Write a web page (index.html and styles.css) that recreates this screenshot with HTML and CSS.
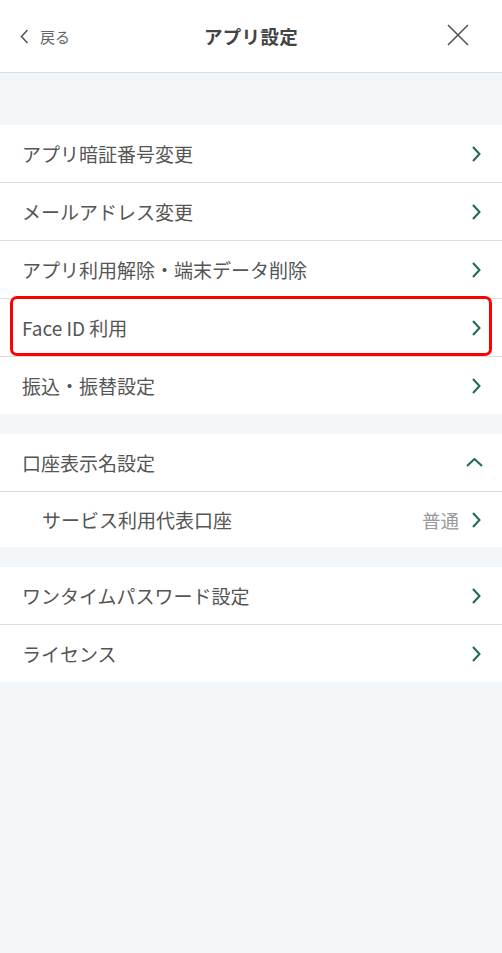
FILE: index.html
```html
<!DOCTYPE html>
<html lang="ja">
<head>
<meta charset="utf-8">
<title>アプリ設定</title>
<link rel="stylesheet" href="styles.css">
</head>
<body>
<header class="header">
  <div class="back">
    <svg class="back-icon" width="9" height="15" viewBox="0 0 9 15"><path d="M7.5 1 L1.5 7.5 L7.5 14" fill="none" stroke="#555" stroke-width="1.6"/></svg>
    <span>戻る</span>
  </div>
  <h1 class="title">アプリ設定</h1>
  <svg class="close" width="22" height="22" viewBox="0 0 22 22"><path d="M1 1 L21 21 M21 1 L1 21" fill="none" stroke="#555" stroke-width="1.6"/></svg>
</header>

<main class="content">
  <section class="group">
    <div class="row"><span class="label">アプリ暗証番号変更</span><svg class="chev" width="9" height="16" viewBox="0 0 9 16"><path d="M1 1 L7.5 8 L1 15" fill="none" stroke="#1d6b48" stroke-width="2"/></svg></div>
    <div class="row"><span class="label">メールアドレス変更</span><svg class="chev" width="9" height="16" viewBox="0 0 9 16"><path d="M1 1 L7.5 8 L1 15" fill="none" stroke="#1d6b48" stroke-width="2"/></svg></div>
    <div class="row"><span class="label">アプリ利用解除・端末データ削除</span><svg class="chev" width="9" height="16" viewBox="0 0 9 16"><path d="M1 1 L7.5 8 L1 15" fill="none" stroke="#1d6b48" stroke-width="2"/></svg></div>
    <div class="row highlighted"><span class="label">Face ID 利用</span><svg class="chev" width="9" height="16" viewBox="0 0 9 16"><path d="M1 1 L7.5 8 L1 15" fill="none" stroke="#1d6b48" stroke-width="2"/></svg><div class="mark"></div></div>
    <div class="row"><span class="label">振込・振替設定</span><svg class="chev" width="9" height="16" viewBox="0 0 9 16"><path d="M1 1 L7.5 8 L1 15" fill="none" stroke="#1d6b48" stroke-width="2"/></svg></div>
  </section>

  <section class="group">
    <div class="row"><span class="label">口座表示名設定</span><svg class="chev-up" width="17" height="9" viewBox="0 0 17 9"><path d="M1 8 L8.5 1 L16 8" fill="none" stroke="#1d6b48" stroke-width="2"/></svg></div>
    <div class="row sub"><span class="label">サービス利用代表口座</span><span class="value">普通</span><svg class="chev" width="9" height="16" viewBox="0 0 9 16"><path d="M1 1 L7.5 8 L1 15" fill="none" stroke="#1d6b48" stroke-width="2"/></svg></div>
  </section>

  <section class="group">
    <div class="row"><span class="label">ワンタイムパスワード設定</span><svg class="chev" width="9" height="16" viewBox="0 0 9 16"><path d="M1 1 L7.5 8 L1 15" fill="none" stroke="#1d6b48" stroke-width="2"/></svg></div>
    <div class="row"><span class="label">ライセンス</span><svg class="chev" width="9" height="16" viewBox="0 0 9 16"><path d="M1 1 L7.5 8 L1 15" fill="none" stroke="#1d6b48" stroke-width="2"/></svg></div>
  </section>
</main>
</body>
</html>
```

FILE: styles.css
```css
* { box-sizing: border-box; }
html, body {
  margin: 0;
  padding: 0;
  height: 100%;
}
body {
  background: #f3f6f9;
  font-family: "Noto Sans CJK JP", "Noto Sans", sans-serif;
  color: #555;
}
.header {
  height: 73px;
  background: #fff;
  border-bottom: 1.5px solid #dcdcdc;
  display: flex;
  align-items: center;
  justify-content: space-between;
  padding: 0 33px 0 20px;
  position: relative;
}
.back {
  display: flex;
  align-items: center;
  gap: 11px;
  font-size: 15px;
  color: #666;
  width: 90px;
}
.back-icon { display: block; }
.title {
  margin: 0;
  font-size: 18.5px;
  font-weight: 700;
  color: #444;
  letter-spacing: 0.3px;
  position: absolute;
  left: 0;
  right: 0;
  text-align: center;
  pointer-events: none;
}
.close { display: block; margin-top: -2px; }
.content {
  padding-top: 52px;
  display: flex;
  flex-direction: column;
  gap: 20px;
}
.group {
  background: #fff;
  display: flex;
  flex-direction: column;
}
.row {
  height: 58px;
  display: flex;
  align-items: center;
  padding: 0 21px 0 22px;
  border-bottom: 1px solid #dedede;
  font-size: 19px;
  color: #555;
  position: relative;
}
.row:last-child { border-bottom: none; height: 57px; }
.row.sub { padding-left: 42px; height: 55px; }
.label { flex: 1; white-space: nowrap; }
.value {
  color: #999;
  font-size: 18.5px;
  margin-right: 13px;
}
.chev { display: block; }
.chev-up { display: block; margin-right: -2px; }
.mark {
  position: absolute;
  left: 10px;
  right: 10px;
  top: -3px;
  bottom: 0;
  border: 3.5px solid #ff0000;
  border-radius: 7px;
  pointer-events: none;
}
```
